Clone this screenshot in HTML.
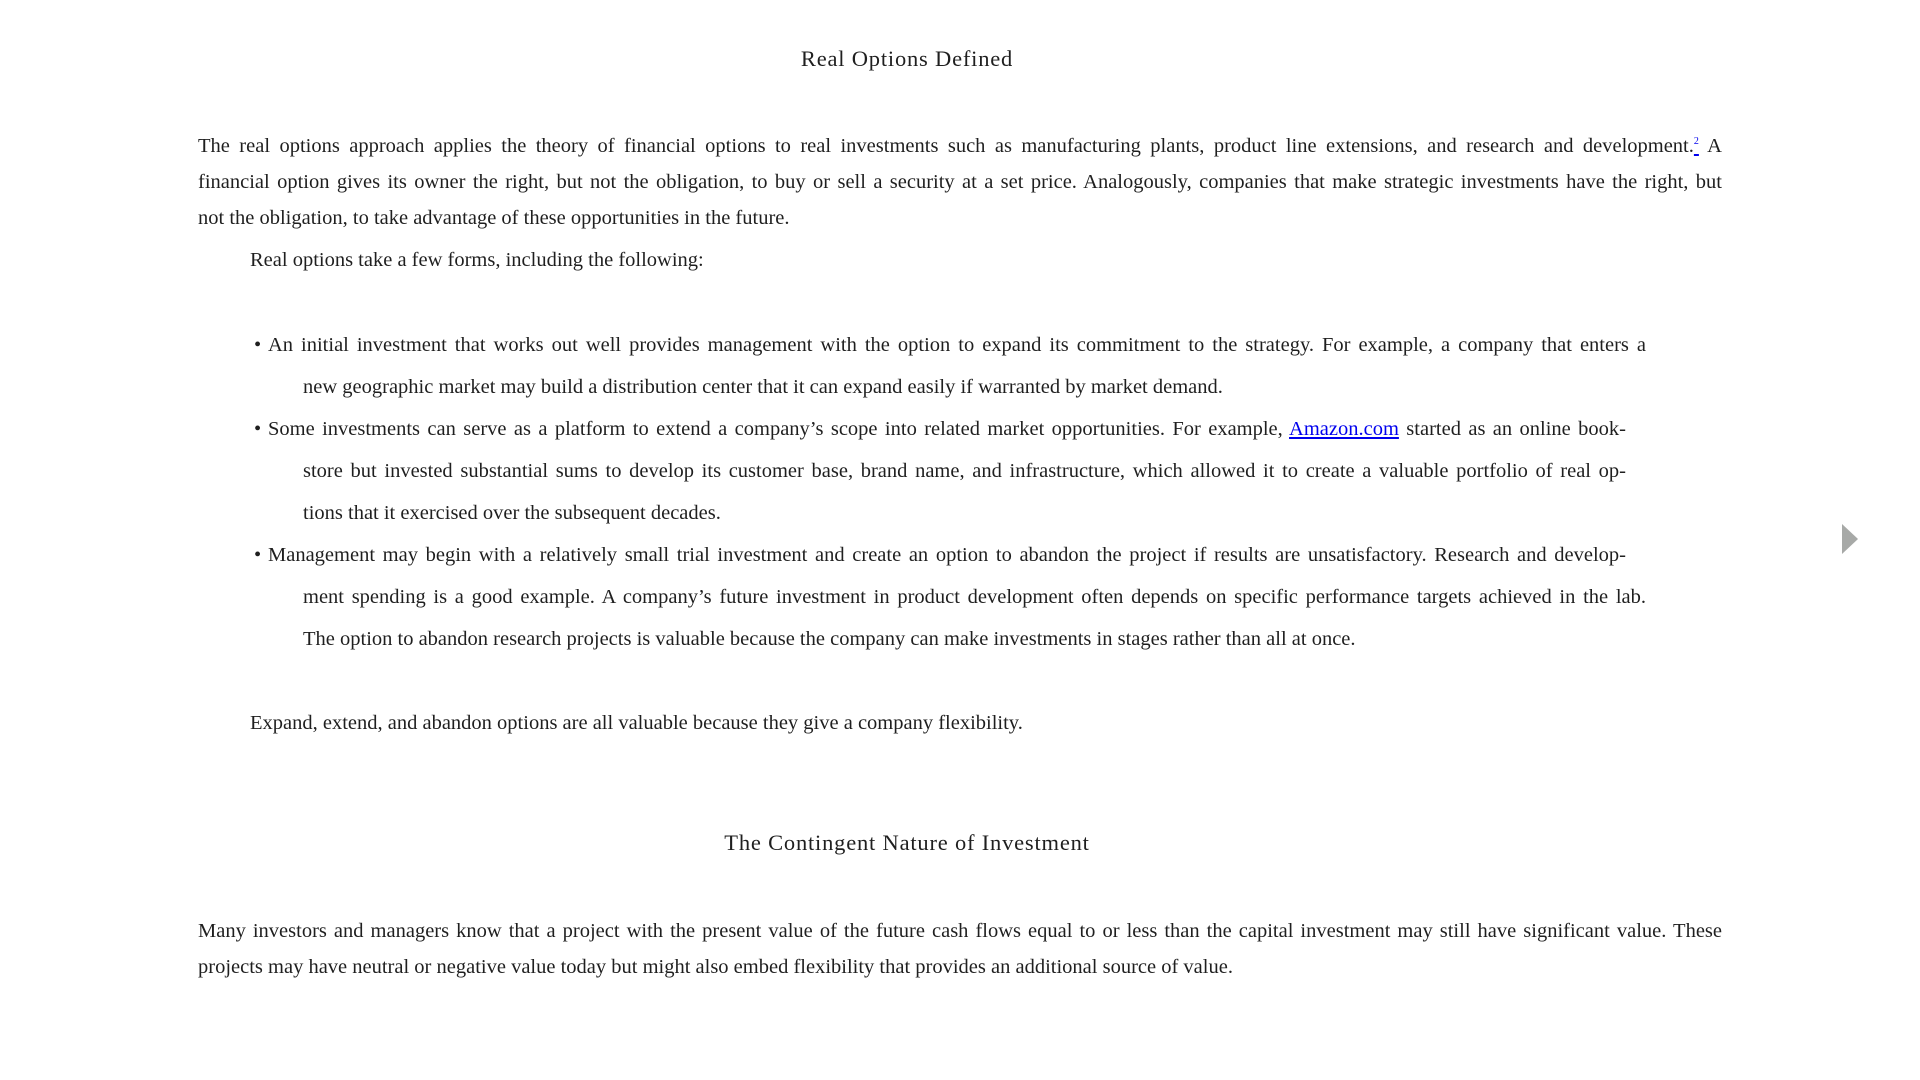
<!DOCTYPE html>
<html><head><meta charset="utf-8"><style>
html,body{margin:0;padding:0;background:#fff;}
body{width:1920px;height:1080px;position:relative;overflow:hidden;font-family:"Liberation Serif","DejaVu Serif",serif;color:#1f1f1f;}
.l{position:absolute;white-space:nowrap;font-size:20.5px;line-height:24px;height:24px;transform:translateY(-12px);}
.h{position:absolute;white-space:nowrap;font-size:22.5px;letter-spacing:0.8px;line-height:24px;transform:translate(-50%,-12px);left:907px;}
a{color:#0000ee;text-decoration:underline;}
sup{font-size:10px;line-height:0;vertical-align:8px;}
.tri{position:absolute;left:1842px;top:524px;width:0;height:0;border-top:15.5px solid transparent;border-bottom:15.5px solid transparent;border-left:16px solid #a7a9a7;}
</style></head><body>
<div class="h" style="top:59px">Real Options Defined</div>
<div class="l" style="left:198px;top:146px;width:1524px;text-align:justify;text-align-last:justify">The real options approach applies the theory of financial options to real investments such as manufacturing plants, product line extensions, and research and development.<a><sup>2</sup></a> A</div>
<div class="l" style="left:198px;top:182px;width:1524px;text-align:justify;text-align-last:justify">financial option gives its owner the right, but not the obligation, to buy or sell a security at a set price. Analogously, companies that make strategic investments have the right, but</div>
<div class="l" style="left:198px;top:218px">not the obligation, to take advantage of these opportunities in the future.</div>
<div class="l" style="left:250px;top:260px">Real options take a few forms, including the following:</div>
<div class="l" style="left:254px;top:345px">•</div>
<div class="l" style="left:268px;top:345px;width:1378px;text-align:justify;text-align-last:justify">An initial investment that works out well provides management with the option to expand its commitment to the strategy. For example, a company that enters a</div>
<div class="l" style="left:303px;top:387px">new geographic market may build a distribution center that it can expand easily if warranted by market demand.</div>
<div class="l" style="left:254px;top:429px">•</div>
<div class="l" style="left:268px;top:429px;width:1358px;text-align:justify;text-align-last:justify">Some investments can serve as a platform to extend a company’s scope into related market opportunities. For example, <a>Amazon.com</a> started as an online book-</div>
<div class="l" style="left:303px;top:471px;width:1323px;text-align:justify;text-align-last:justify">store but invested substantial sums to develop its customer base, brand name, and infrastructure, which allowed it to create a valuable portfolio of real op-</div>
<div class="l" style="left:303px;top:513px">tions that it exercised over the subsequent decades.</div>
<div class="l" style="left:254px;top:555px">•</div>
<div class="l" style="left:268px;top:555px;width:1358px;text-align:justify;text-align-last:justify">Management may begin with a relatively small trial investment and create an option to abandon the project if results are unsatisfactory. Research and develop-</div>
<div class="l" style="left:303px;top:597px;width:1343px;text-align:justify;text-align-last:justify">ment spending is a good example. A company’s future investment in product development often depends on specific performance targets achieved in the lab.</div>
<div class="l" style="left:303px;top:639px">The option to abandon research projects is valuable because the company can make investments in stages rather than all at once.</div>
<div class="l" style="left:250px;top:723px">Expand, extend, and abandon options are all valuable because they give a company flexibility.</div>
<div class="h" style="top:843px">The Contingent Nature of Investment</div>
<div class="l" style="left:198px;top:931px;width:1524px;text-align:justify;text-align-last:justify">Many investors and managers know that a project with the present value of the future cash flows equal to or less than the capital investment may still have significant value. These</div>
<div class="l" style="left:198px;top:967px">projects may have neutral or negative value today but might also embed flexibility that provides an additional source of value.</div>
<div class="tri"></div>
</body></html>
